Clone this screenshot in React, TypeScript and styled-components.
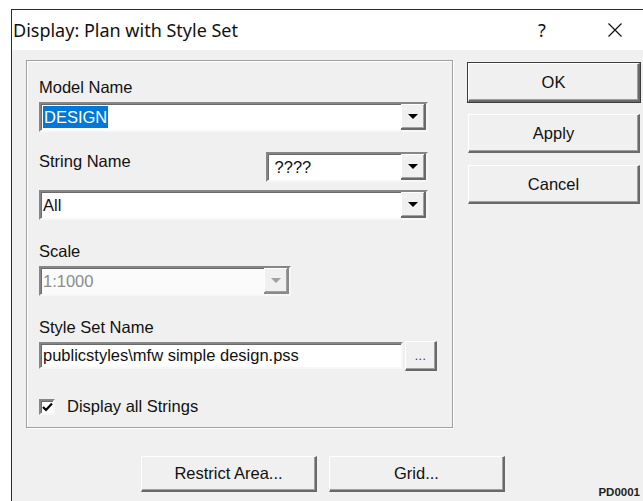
import React from "react";
import styled, { createGlobalStyle, css } from "styled-components";

const Global = createGlobalStyle`
  html, body {
    margin: 0;
    padding: 0;
    background: #ffffff;
  }
  body {
    width: 643px;
    height: 501px;
    overflow: hidden;
    font-family: "Liberation Sans", Arial, sans-serif;
    color: #000;
  }
`;

const Page = styled.div`
  padding: 9px 0 0 11px;
  height: 501px;
  box-sizing: border-box;
`;

const Window = styled.div`
  width: 640px;
  height: 492px;
  box-sizing: border-box;
  border-top: 1px solid #2b2b2b;
  border-left: 1px solid #2b2b2b;
  background: #f0f0f0;
  display: flex;
  flex-direction: column;
`;

const TitleBar = styled.div`
  height: 40px;
  flex: none;
  background: #ffffff;
  display: flex;
  align-items: center;
  padding-left: 1px;
`;

const Title = styled.span`
  font-family: "Noto Sans", "Open Sans", sans-serif;
  font-size: 18px;
  color: #111;
  flex: 1;
`;

const CaptionGlyph = styled.span`
  font-family: "Noto Sans", sans-serif;
  font-size: 18px;
  color: #111;
  width: 20px;
  text-align: center;
  margin-right: 55px;
`;

const CloseIcon = styled.svg`
  width: 16px;
  height: 16px;
  margin-right: 28px;
`;

const Body = styled.div`
  flex: 1;
  display: flex;
  flex-direction: column;
  padding: 10px 11px 0 14px;
`;

const TopRow = styled.div`
  display: flex;
  align-items: flex-start;
  gap: 15px;
`;

const GroupBox = styled.div`
  width: 427px;
  height: 368px;
  box-sizing: border-box;
  border: 1px solid #a0a0a0;
  box-shadow: inset 1px 1px 0 #ffffff, 1px 1px 0 #ffffff;
  padding: 17px 0 0 12px;
  display: flex;
  flex-direction: column;
`;

const Label = styled.div<{ $gap?: number }>`
  font-size: 16.5px;
  line-height: 19px;
  height: 19px;
  margin-top: ${(p) => p.$gap ?? 0}px;
  color: #111;
  white-space: nowrap;
`;

const sunken = css`
  box-sizing: border-box;
  border-style: solid;
  border-width: 2px;
  border-color: #868686 #f7f7f7 #f7f7f7 #868686;
  box-shadow: inset 1px 1px 0 #6b6b6b;
  background: #ffffff;
`;

const Combo = styled.div<{ $width: number; $gap?: number; $disabled?: boolean }>`
  ${sunken};
  width: ${(p) => p.$width}px;
  height: 30px;
  margin-top: ${(p) => p.$gap ?? 0}px;
  display: flex;
  align-items: stretch;
  background: ${(p) => (p.$disabled ? "#fbfbfb" : "#ffffff")};
`;

const ComboText = styled.div<{ $disabled?: boolean }>`
  flex: 1;
  display: flex;
  align-items: center;
  padding-left: 2px;
  font-size: 16.5px;
  color: ${(p) => (p.$disabled ? "#8c8c8c" : "#111")};
  white-space: nowrap;
  overflow: hidden;
`;

const Selected = styled.span`
  background: #0078d7;
  color: #ffffff;
  line-height: 22px;
  padding: 0 1px;
`;

const DropButton = styled.div<{ $disabled?: boolean }>`
  width: 25px;
  flex: none;
  box-sizing: border-box;
  background: #f0f0f0;
  border-right: 2px solid ${(p) => (p.$disabled ? "#8a8a8a" : "#696969")};
  border-bottom: 2px solid ${(p) => (p.$disabled ? "#8a8a8a" : "#696969")};
  box-shadow: inset 1px 1px 0 #ffffff, inset -1px -1px 0 #a0a0a0;
  display: flex;
  align-items: center;
  justify-content: center;
`;

const Arrow = styled.span<{ $disabled?: boolean }>`
  width: 0;
  height: 0;
  border-left: 5px solid transparent;
  border-right: 5px solid transparent;
  border-top: 5px solid ${(p) => (p.$disabled ? "#a0a0a0" : "#000")};
  margin-top: 1px;
`;

const StringRow = styled.div`
  display: flex;
  align-items: flex-start;
  margin-top: 20px;
  height: 30px;
`;

const StringLabel = styled(Label)`
  width: 227px;
`;

const PathRow = styled.div`
  display: flex;
  align-items: flex-start;
  gap: 2px;
  margin-top: 4px;
`;

const PathInput = styled.div`
  ${sunken};
  width: 364px;
  height: 27px;
  margin-top: 1px;
  display: flex;
  align-items: center;
  padding-left: 2px;
  font-size: 16.5px;
  color: #111;
  white-space: nowrap;
`;

const raised = css`
  box-sizing: border-box;
  background: #f0f0f0;
  border-style: solid;
  border-width: 1px 2px 2px 1px;
  border-color: #ffffff #696969 #696969 #ffffff;
  box-shadow: inset -1px -1px 0 #a0a0a0;
`;

const BrowseButton = styled.div`
  ${raised};
  width: 32px;
  height: 30px;
  display: flex;
  align-items: flex-end;
  justify-content: center;
  padding-bottom: 7px;
  font-size: 12px;
  letter-spacing: 0.5px;
  color: #333;
  line-height: 1;
`;

const CheckRow = styled.label`
  display: flex;
  align-items: center;
  gap: 12px;
  margin-top: 26px;
  font-size: 16.5px;
  color: #111;
`;

const CheckBox = styled.span`
  ${sunken};
  width: 16px;
  height: 16px;
  display: flex;
  align-items: center;
  justify-content: center;
`;

const SideButtons = styled.div`
  display: flex;
  flex-direction: column;
  gap: 12px;
  padding-top: 3px;
`;

const Button = styled.div<{ $default?: boolean; $width: number; $height: number }>`
  ${raised};
  width: ${(p) => p.$width}px;
  height: ${(p) => p.$height}px;
  display: flex;
  align-items: center;
  justify-content: center;
  font-size: 16.5px;
  color: #111;
  ${(p) =>
    p.$default &&
    css`
      outline: 1px solid #3c3c3c;
      outline-offset: 0;
    `}
`;

const BottomRow = styled.div`
  display: flex;
  align-items: flex-start;
  margin-top: 28px;
  padding-left: 115px;
  gap: 12px;
`;

const FormCode = styled.span`
  margin-left: auto;
  margin-top: 30px;
  font-size: 11.5px;
  font-weight: 700;
  color: #222;
`;

export default function App() {
  return (
    <>
      <Global />
      <Page>
        <Window>
          <TitleBar>
            <Title>Display: Plan with Style Set</Title>
            <CaptionGlyph>?</CaptionGlyph>
            <CloseIcon viewBox="0 0 16 16">
              <path d="M1.5 1.5 L14.5 14.5 M14.5 1.5 L1.5 14.5" stroke="#111" strokeWidth="1.2" fill="none" />
            </CloseIcon>
          </TitleBar>
          <Body>
            <TopRow>
              <GroupBox>
                <Label>Model Name</Label>
                <Combo $width={389} $gap={5}>
                  <ComboText>
                    <Selected>DESIGN</Selected>
                  </ComboText>
                  <DropButton>
                    <Arrow />
                  </DropButton>
                </Combo>

                <StringRow>
                  <StringLabel>String Name</StringLabel>
                  <Combo $width={162}>
                    <ComboText>&nbsp;????</ComboText>
                    <DropButton>
                      <Arrow />
                    </DropButton>
                  </Combo>
                </StringRow>

                <Combo $width={389} $gap={8}>
                  <ComboText>All</ComboText>
                  <DropButton>
                    <Arrow />
                  </DropButton>
                </Combo>

                <Label $gap={22}>Scale</Label>
                <Combo $width={252} $gap={5} $disabled>
                  <ComboText $disabled>1:1000</ComboText>
                  <DropButton $disabled>
                    <Arrow $disabled />
                  </DropButton>
                </Combo>

                <Label $gap={22}>Style Set Name</Label>
                <PathRow>
                  <PathInput>publicstyles\mfw simple design.pss</PathInput>
                  <BrowseButton>...</BrowseButton>
                </PathRow>

                <CheckRow>
                  <CheckBox>
                    <svg width="11" height="10" viewBox="0 0 11 10">
                      <path d="M1 5 L4 8 L10 1.5" stroke="#000" strokeWidth="2.2" fill="none" />
                    </svg>
                  </CheckBox>
                  Display all Strings
                </CheckRow>
              </GroupBox>

              <SideButtons>
                <Button $default $width={172} $height={39}>
                  OK
                </Button>
                <Button $width={172} $height={39}>
                  Apply
                </Button>
                <Button $width={172} $height={39}>
                  Cancel
                </Button>
              </SideButtons>
            </TopRow>

            <BottomRow>
              <Button $width={176} $height={36}>
                Restrict Area...
              </Button>
              <Button $width={176} $height={36}>
                Grid...
              </Button>
              <FormCode>PD0001</FormCode>
            </BottomRow>
          </Body>
        </Window>
      </Page>
    </>
  );
}
